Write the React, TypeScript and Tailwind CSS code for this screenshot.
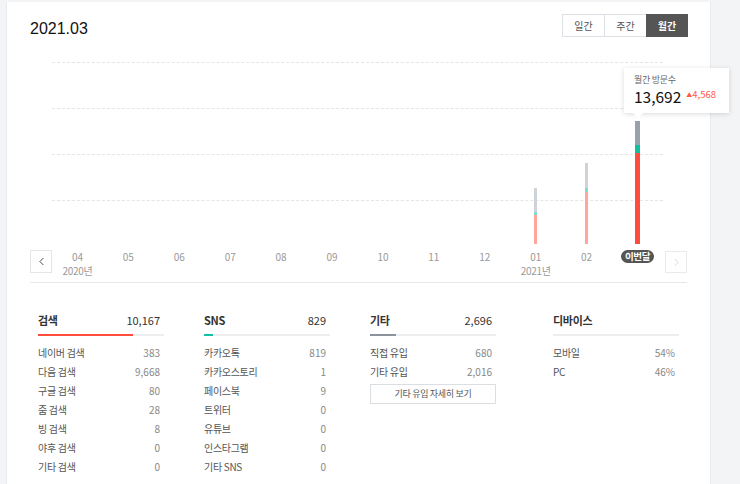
import React from "react";
import { ChevronLeft, ChevronRight } from "lucide-react";

type Bar = { g: number; t: number; r: number; cur?: boolean };

const months: { m: string; y?: string; bar?: Bar }[] = [
  { m: "04", y: "2020년" },
  { m: "05" },
  { m: "06" },
  { m: "07" },
  { m: "08" },
  { m: "09" },
  { m: "10" },
  { m: "11" },
  { m: "12" },
  { m: "01", y: "2021년", bar: { g: 24, t: 3, r: 29 } },
  { m: "02", y: undefined, bar: { g: 25, t: 4, r: 52 } },
  { m: "이번달", bar: { g: 24, t: 8, r: 91, cur: true } },
];

type Col = {
  title: string;
  total?: string;
  fill: number;
  fillColor: string;
  rows: [string, string][];
  button?: boolean;
  ml: string;
};

const cols: Col[] = [
  {
    title: "검색",
    total: "10,167",
    fill: 95,
    fillColor: "bg-[#ff4d3d]",
    rows: [
      ["네이버 검색", "383"],
      ["다음 검색", "9,668"],
      ["구글 검색", "80"],
      ["줌 검색", "28"],
      ["빙 검색", "8"],
      ["야후 검색", "0"],
      ["기타 검색", "0"],
    ],
    ml: "ml-0",
  },
  {
    title: "SNS",
    total: "829",
    fill: 9,
    fillColor: "bg-[#14c0a5]",
    rows: [
      ["카카오톡", "819"],
      ["카카오스토리", "1"],
      ["페이스북", "9"],
      ["트위터", "0"],
      ["유튜브", "0"],
      ["인스타그램", "0"],
      ["기타 SNS", "0"],
    ],
    ml: "ml-[40px]",
  },
  {
    title: "기타",
    total: "2,696",
    fill: 26,
    fillColor: "bg-[#8b939c]",
    rows: [
      ["직접 유입", "680"],
      ["기타 유입", "2,016"],
    ],
    button: true,
    ml: "ml-[40px]",
  },
  {
    title: "디바이스",
    fill: 0,
    fillColor: "bg-transparent",
    rows: [
      ["모바일", "54%"],
      ["PC", "46%"],
    ],
    ml: "ml-[57px]",
  },
];

function Stat({ c }: { c: Col }) {
  return (
    <div className={`w-[126px] ${c.ml}`}>
      <div className="flex items-center justify-between pr-[4px] h-[20px]">
        <span className="text-[11px] font-bold text-[#333] tracking-[-0.3px]">{c.title}</span>
        {c.total && <span className="text-[11px] text-[#333]">{c.total}</span>}
      </div>
      <div className="mt-[4px] h-[2px] w-full bg-[#eceef0] flex">
        <div className={`h-full ${c.fillColor}`} style={{ width: `${c.fill}px` }} />
      </div>
      <div className="mt-[7px] flex flex-col">
        {c.rows.map(([k, v]) => (
          <div key={k} className="flex items-center justify-between pr-[4px] h-[19px]">
            <span className="text-[10px] text-[#555] tracking-[-0.3px]">{k}</span>
            <span className="text-[10px] text-[#888]">{v}</span>
          </div>
        ))}
      </div>
      {c.button && (
        <div className="mt-[3px] h-[20px] w-full border border-[#dcdfe2] flex items-center justify-center text-[9px] text-[#555] tracking-[-0.3px]">
          기타 유입 자세히 보기
        </div>
      )}
    </div>
  );
}

export default function App() {
  return (
    <div className="w-[740px] h-[484px] overflow-hidden bg-[#f3f4f6] pt-[2px] pl-[6px] font-['Noto_Sans_CJK_KR','Noto_Sans',sans-serif]">
      <div className="relative w-[705px] h-[482px] bg-white border-l border-r border-[#e8eaed]">
        {/* header */}
        <div className="flex items-start justify-between pl-[23px] pr-[22px] pt-[12px]">
          <div className="mt-[5px] text-[16px] leading-[20px] text-[#111] font-['Liberation_Sans',sans-serif]">2021.03</div>
          <div className="flex h-[23px] border border-[#dcdfe3] text-[10px]">
            <div className="w-[42px] flex items-center justify-center text-[#555] border-r border-[#dcdfe3]">일간</div>
            <div className="w-[41px] flex items-center justify-center text-[#555]">주간</div>
            <div className="w-[42px] flex items-center justify-center bg-[#555] text-white font-bold -my-px -mr-px">월간</div>
          </div>
        </div>

        {/* chart */}
        <div className="relative ml-[45px] mt-[23px] w-[611px] h-[182px]">
          <div className="absolute left-0 right-0 top-0 border-t border-dashed border-[#e3e5e8]" />
          <div className="absolute left-0 right-0 top-[46px] border-t border-dashed border-[#e3e5e8]" />
          <div className="absolute left-0 right-0 top-[92px] border-t border-dashed border-[#e3e5e8]" />
          <div className="absolute left-0 right-0 top-[138px] border-t border-dashed border-[#e3e5e8]" />
          <div className="relative grid grid-cols-12 h-full">
            {months.map((mo, i) => (
              <div key={i} className="flex flex-col items-center justify-end h-full">
                {mo.bar && (
                  <div className={`flex flex-col ${mo.bar.cur ? "w-[5px]" : "w-[3px]"}`}>
                    <div
                      className={mo.bar.cur ? "bg-[#98a1ab]" : "bg-[#cfd3d8]"}
                      style={{ height: mo.bar.g }}
                    />
                    <div
                      className={mo.bar.cur ? "bg-[#0fbf9f]" : "bg-[#7fdccc]"}
                      style={{ height: mo.bar.t }}
                    />
                    <div
                      className={mo.bar.cur ? "bg-[#ff4d3d]" : "bg-[#ffa59b]"}
                      style={{ height: mo.bar.r }}
                    />
                  </div>
                )}
              </div>
            ))}
          </div>
        </div>

        {/* axis */}
        <div className="mx-[23px] mt-[6px] pb-[5px] border-b border-[#e6e8eb] flex items-start">
          <div className="w-[22px] h-[23px] border border-[#e3e5e8] flex items-center justify-center text-[#333]">
            <ChevronLeft size={13} strokeWidth={1.6} />
          </div>
          <div className="w-[611px] grid grid-cols-12">
            {months.map((mo, i) => (
              <div key={i} className="flex flex-col items-center">
                {mo.m === "이번달" ? (
                  <div className="h-[13px] px-[4px] rounded-full bg-[#555] text-white text-[9.5px] font-bold leading-[13px] tracking-[-0.3px]">
                    이번달
                  </div>
                ) : (
                  <div className="h-[13px] text-[10px] leading-[13px] text-[#999]">{mo.m}</div>
                )}
                {mo.y && <div className="mt-[1px] text-[10px] leading-[13px] text-[#999] tracking-[-0.3px]">{mo.y}</div>}
              </div>
            ))}
          </div>
          <div className="ml-[2px] mt-[1px] w-[22px] h-[22px] border border-[#e8eaed] flex items-center justify-center text-[#c8ccd0]">
            <ChevronRight size={13} strokeWidth={1.4} />
          </div>
        </div>

        {/* stats */}
        <div className="flex ml-[31px] mt-[27px]">
          {cols.map((c) => (
            <Stat key={c.title} c={c} />
          ))}
        </div>

        {/* tooltip */}
        <div className="absolute left-[617px] top-[66px] w-[105px] h-[45px] bg-white shadow-[0_1px_5px_rgba(0,0,0,0.15)] pl-[10px] pt-[6px]">
          <div className="text-[9px] leading-[11px] text-[#666] tracking-[-0.3px]">월간 방문수</div>
          <div className="flex items-start">
            <span className="text-[15.5px] leading-[22px] text-[#111]">13,692</span>
            <span className="ml-[5px] mt-[4px] text-[9.5px] leading-[11px] text-[#ff5a4a]">
              <span className="text-[6px] align-top">▲</span>4,568
            </span>
          </div>
          <div className="absolute left-[9px] bottom-[-5px] w-0 h-0 border-l-[5px] border-r-[5px] border-t-[5px] border-l-transparent border-r-transparent border-t-white" />
        </div>
      </div>
    </div>
  );
}
